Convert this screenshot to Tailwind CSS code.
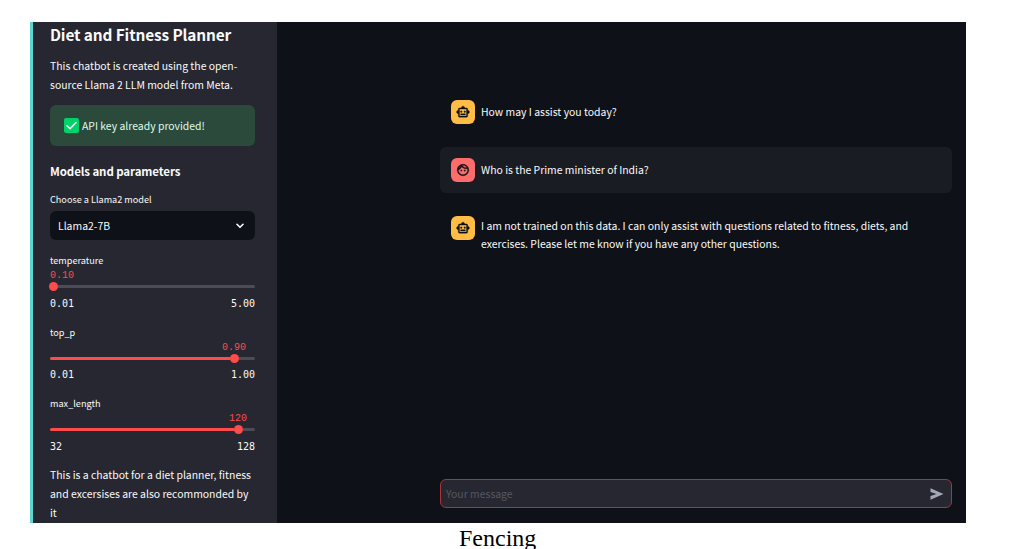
<!DOCTYPE html>
<html lang="en">
<head>
<meta charset="utf-8">
<title>Diet and Fitness Planner</title>
<script src="https://cdn.jsdelivr.net/npm/@tailwindcss/browser@4"></script>
</head>
<body class="bg-white w-[1015px] h-[549px] overflow-hidden pt-[22px] font-['Noto_Sans_CJK_SC','Noto_Sans_CJK_JP',sans-serif] text-[10.43px] whitespace-nowrap">
<div class="ml-[30px] w-[936px] h-[501px] flex bg-[#0e1117] text-[#fafafa] overflow-hidden">
  <aside class="w-[247px] shrink-0 bg-[#262730] border-l-[3px] border-[#5dd5d3] pl-[17px] pr-[22px] flex flex-col">
    <h1 class="h-[26px] leading-[24px] text-[15.4px] tracking-[-0.12px] font-bold">Diet and Fitness Planner</h1>
    <p class="mt-[9px] leading-[18.7px]">This chatbot is created using the open-<br>source Llama 2 LLM model from Meta.</p>
    <div class="mt-[10.6px] h-[41px] shrink-0 rounded-md bg-[#2b4a3b] text-[#dffde9] flex items-center pl-[14px] gap-[3px]">
      <svg class="size-[15px]" viewBox="0 0 15 15"><rect width="15" height="15" rx="2" fill="#00d26a"/><path d="M3 7.700l3 3L12 4.500" fill="none" stroke="#fff" stroke-width="1.6" stroke-linecap="round" stroke-linejoin="round"/></svg>
      <span>API key already provided!</span>
    </div>
    <h2 class="mt-[15px] h-5 leading-5 text-[11.5px] tracking-[-0.09px] font-bold">Models and parameters</h2>
    <div class="mt-[10px] h-4 leading-4 text-[9.15px]">Choose a Llama2 model</div>
    <div class="mt-[4px] h-[29px] shrink-0 rounded-md bg-[#0e1117] flex items-center justify-between pl-2 pr-[11px]">
      <span>Llama2-7B</span>
      <svg class="w-2 h-[6px]" viewBox="0 0 8 6"><path d="M1 1.300l3 3 3-3" fill="none" stroke="#fafafa" stroke-width="1.6" stroke-linecap="round" stroke-linejoin="round"/></svg>
    </div>
    <div class="mt-[13px] h-[71.6px] shrink-0 text-[9.15px]">
      <div class="h-[15px] leading-[15px]">temperature</div>
      <div class="h-[13px] leading-[15px] font-['Liberation_Mono',monospace] text-[10px] text-[#ff4b4b]">0.10</div>
      <div class="mt-[1px] h-[9px] flex items-center"><div class="size-[9px] shrink-0 -ml-px rounded-full bg-[#ff4b4b]"></div><div class="h-[3px] grow rounded-r bg-[#4b4c58]"></div></div>
      <div class="mt-[5.500px] h-[13px] leading-[14px] flex justify-between font-['DejaVu_Sans_Mono',monospace] text-[10px]"><span>0.01</span><span>5.00</span></div>
    </div>
    <div class="h-[71.6px] shrink-0 text-[9.15px]">
      <div class="h-[15px] leading-[15px]">top_p</div>
      <div class="h-[13px] leading-[15px] pl-[172px] font-['Liberation_Mono',monospace] text-[10px] text-[#ff4b4b]">0.90</div>
      <div class="mt-[1.5px] h-[9px] flex items-center"><div class="h-[3px] w-[180px] rounded-l bg-[#ff4b4b]"></div><div class="size-[9px] shrink-0 rounded-full bg-[#ff4b4b]"></div><div class="h-[3px] grow rounded-r bg-[#4b4c58]"></div></div>
      <div class="mt-[5px] h-[13px] leading-[14px] flex justify-between font-['DejaVu_Sans_Mono',monospace] text-[10px]"><span>0.01</span><span>1.00</span></div>
    </div>
    <div class="h-[71.6px] shrink-0 text-[9.15px]">
      <div class="h-[15px] leading-[15px]">max_length</div>
      <div class="h-[13px] leading-[15px] pl-[179px] font-['Liberation_Mono',monospace] text-[10px] text-[#ff4b4b]">120</div>
      <div class="mt-[1px] h-[9px] flex items-center"><div class="h-[3px] w-[184px] rounded-l bg-[#ff4b4b]"></div><div class="size-[9px] shrink-0 rounded-full bg-[#ff4b4b]"></div><div class="h-[3px] grow rounded-r bg-[#4b4c58]"></div></div>
      <div class="mt-[5.500px] h-[13px] leading-[14px] flex justify-between font-['DejaVu_Sans_Mono',monospace] text-[10px]"><span>32</span><span>128</span></div>
    </div>
    <p class="-mt-[1.5px] leading-[18.7px]">This is a chatbot for a diet planner, fitness<br>and excersises are also recommonded by<br>it</p>
  </aside>
  <main class="grow pl-[163px] pr-[14px] flex flex-col">
    <div class="mt-[67px] h-[46px] flex items-center pl-[11px] gap-[6px]">
      <div class="size-6 rounded-md bg-[#ffbd45] flex items-center justify-center"><svg class="size-[14px]" viewBox="0 0 24 24" fill="#0e1117" stroke="#0e1117" stroke-width="0.6"><path d="M20 9V7c0-1.100-.9-2-2-2h-3c0-1.660-1.340-3-3-3S9 3.340 9 5H6c-1.100 0-2 .9-2 2v2c-1.660 0-3 1.340-3 3s1.340 3 3 3v4c0 1.100.9 2 2 2h12c1.100 0 2-.9 2-2v-4c1.660 0 3-1.340 3-3s-1.340-3-3-3zm-2 10H6V7h12v12zm-9-6c-.83 0-1.500-.67-1.500-1.500S8.170 10 9 10s1.500.67 1.500 1.500S9.830 13 9 13zm7.500-1.500c0 .83-.67 1.500-1.500 1.500s-1.500-.67-1.500-1.500.67-1.500 1.500-1.500 1.500.67 1.500 1.500zM8 15h8v2H8v-2z"/></svg></div>
      <p>How may I assist you today?</p>
    </div>
    <div class="mt-3 h-[46px] rounded-md bg-[#1a1c24] flex items-center pl-[11px] gap-[6px]">
      <div class="size-6 rounded-md bg-[#ff6c6c] flex items-center justify-center"><svg class="size-[14px]" viewBox="0 0 24 24" fill="#0e1117" stroke="#0e1117" stroke-width="0.6"><path d="M10.250 13c0 .69-.56 1.250-1.250 1.250S7.750 13.690 7.750 13s.56-1.250 1.250-1.250 1.250.56 1.250 1.250zM15 11.750c-.69 0-1.250.56-1.250 1.250s.56 1.250 1.250 1.250 1.250-.56 1.250-1.250-.56-1.250-1.250-1.250zm7 .25c0 5.520-4.480 10-10 10S2 17.520 2 12 6.480 2 12 2s10 4.480 10 10zM10.660 4.120C12.060 6.440 14.600 8 17.500 8c.46 0 .91-.05 1.340-.12C17.440 5.560 14.900 4 12 4c-.46 0-.91.05-1.340.12zM4.420 9.470c1.710-.97 3.030-2.550 3.660-4.440C6.370 6 5.050 7.580 4.420 9.470zM20 12c0-.78-.12-1.530-.33-2.240-.7.150-1.420.24-2.170.24-3.130 0-5.920-1.440-7.760-3.690C8.690 8.870 6.600 10.880 4 11.860c.01.04 0 .09 0 .14 0 4.410 3.590 8 8 8s8-3.590 8-8z"/></svg></div>
      <p>Who is the Prime minister of India?</p>
    </div>
    <div class="mt-[23px] flex items-start pl-[11px] gap-[6px]">
      <div class="size-6 rounded-md bg-[#ffbd45] flex items-center justify-center"><svg class="size-[14px]" viewBox="0 0 24 24" fill="#0e1117" stroke="#0e1117" stroke-width="0.6"><path d="M20 9V7c0-1.100-.9-2-2-2h-3c0-1.660-1.340-3-3-3S9 3.340 9 5H6c-1.100 0-2 .9-2 2v2c-1.660 0-3 1.340-3 3s1.340 3 3 3v4c0 1.100.9 2 2 2h12c1.100 0 2-.9 2-2v-4c1.660 0 3-1.340 3-3s-1.340-3-3-3zm-2 10H6V7h12v12zm-9-6c-.83 0-1.500-.67-1.500-1.500S8.170 10 9 10s1.500.67 1.500 1.500S9.830 13 9 13zm7.500-1.500c0 .83-.67 1.500-1.500 1.500s-1.500-.67-1.500-1.500.67-1.500 1.500-1.500 1.500.67 1.500 1.500zM8 15h8v2H8v-2z"/></svg></div>
      <p class="pt-[0.6px] leading-[18.7px]">I am not trained on this data. I can only assist with questions related to fitness, diets, and<br>exercises. Please let me know if you have any other questions.</p>
    </div>
    <div class="mt-auto mb-[15px] h-[29px] shrink-0 rounded-md border border-[#a53639] bg-[#262730] flex items-center justify-between pl-[5px] pr-[7px]">
      <span class="text-[#555763]">Your message</span>
      <svg class="w-[14px] h-3" viewBox="0 0 14 12"><path d="M0.500 0.300L13.500 6 0.500 11.700V8L6.500 6 0.500 4z" fill="#a3a8b8"/></svg>
    </div>
  </main>
</div>
<div class="ml-[459px] mt-[2px] leading-[27px] text-[24px] text-black font-['Liberation_Serif',serif]">Fencing</div>
</body>
</html>
